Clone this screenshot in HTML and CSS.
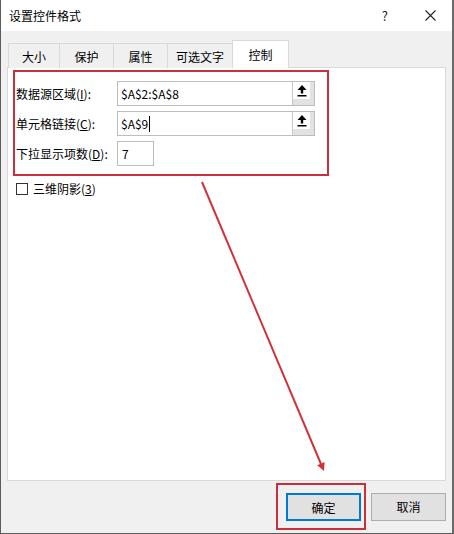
FILE: index.html
```html
<!DOCTYPE html>
<html lang="zh-CN">

  <head>
    <meta charset="UTF-8">
    <meta name="viewport" content="width=device-width, initial-scale=1.0">
    <title>设置控件格式</title>
    <link rel="stylesheet" href="styles.css">
  </head>

  <body>
    <div class="window">
      <div class="titlebar">
        <span class="title">设置控件格式</span>
        <span class="help">?</span>
        <svg class="close" width="11" height="11" viewBox="0 0 11 11">
          <path d="M0.5 0.5 L10.5 10.5 M10.5 0.5 L0.5 10.5" stroke="#222" stroke-width="1.1" fill="none"/>
        </svg>
      </div>

      <div class="dialog">
        <div class="tabs">
          <div class="tab" style="width:52px">大小</div>
          <div class="tab" style="width:55px">保护</div>
          <div class="tab" style="width:55px">属性</div>
          <div class="tab" style="width:66px">可选文字</div>
          <div class="tab active" style="width:57px">控制</div>
        </div>

        <div class="panel">
          <div class="mark-box">
            <div class="form">
              <label class="label">数据源区域(<u>I</u>):</label>
              <div class="ref-field">
                <span class="ref-text">$A$2:$A$8</span>
                <span class="ref-btn">
                  <svg width="10" height="12" viewBox="0 0 10 12">
                    <path d="M5 0 L9.5 5 L0.5 5 Z M3.8 5 H6.2 V8.6 H3.8 Z M0.5 10 H9.5 V11.6 H0.5 Z" fill="#000"/>
                  </svg>
                </span>
              </div>

              <label class="label">单元格链接(<u>C</u>):</label>
              <div class="ref-field">
                <span class="ref-text">$A$9<span class="caret"></span></span>
                <span class="ref-btn">
                  <svg width="10" height="12" viewBox="0 0 10 12">
                    <path d="M5 0 L9.5 5 L0.5 5 Z M3.8 5 H6.2 V8.6 H3.8 Z M0.5 10 H9.5 V11.6 H0.5 Z" fill="#000"/>
                  </svg>
                </span>
              </div>

              <label class="label">下拉显示项数(<u>D</u>):</label>
              <div class="num-field">7</div>
            </div>
          </div>

          <div class="check-row">
            <span class="checkbox"></span>
            <span>三维阴影(<u>3</u>)</span>
          </div>
        </div>

        <div class="footer">
          <div class="mark-btn">
            <button class="btn primary">确定</button>
          </div>
          <button class="btn">取消</button>
        </div>
      </div>

      <svg class="arrow" width="454" height="534" viewBox="0 0 454 534">
        <line x1="202" y1="182" x2="321" y2="464" stroke="#d0323a" stroke-width="2"/>
        <polygon points="324,471 324.6,462 317.2,465.2" fill="#d0323a"/>
      </svg>
    </div>
  </body>

</html>
```

FILE: styles.css
```css
* {
  box-sizing: border-box;
}

body {
  margin: 0;
  background-color: #fff;
  font-family: "Noto Sans CJK SC", "Noto Sans", sans-serif;
  font-size: 12px;
  color: #000;
}

.window {
  position: relative;
  width: 454px;
  height: 534px;
  display: flex;
  flex-direction: column;
  border-left: 1px solid #5c5c5c;
  border-right: 2px solid #6a6a6a;
  border-bottom: 1px solid #5c5c5c;
}

.titlebar {
  height: 31px;
  flex: none;
  display: flex;
  align-items: center;
  padding-left: 8px;
  background-color: #fff;
}

.title {
  font-size: 12px;
  flex: 1;
}

.help {
  font-size: 13px;
  margin-right: 37px;
  color: #222;
}

.close {
  margin-right: 16px;
}

.dialog {
  flex: 1;
  display: flex;
  flex-direction: column;
  background-color: #f0f0f0;
  padding: 9px 6px 0 6px;
}

.tabs {
  display: flex;
  align-items: flex-end;
  padding-left: 2px;
  height: 27px;
  position: relative;
  z-index: 1;
}

.tab {
  height: 25px;
  margin-left: -1px;
  margin-bottom: -1px;
  border: 1px solid #d9d9d9;
  border-bottom: none;
  background-color: #f0f0f0;
  display: flex;
  align-items: center;
  justify-content: center;
  font-size: 12px;
}

.tab.active {
  height: 28px;
  background-color: #fff;
}

.panel {
  height: 414px;
  background-color: #fff;
  border: 1px solid #d9d9d9;
  padding: 2px 0 0 5px;
}

.mark-box {
  width: 316px;
  height: 106px;
  border: 2px solid #c8303a;
  padding: 9px 0 0 1px;
}

.form {
  display: grid;
  grid-template-columns: 101px auto;
  row-gap: 5px;
  align-items: center;
  justify-items: start;
}

.label {
  white-space: nowrap;
}

.ref-field {
  display: flex;
  width: 198px;
  height: 25px;
  border: 1px solid #bdbdbd;
}

.ref-text {
  flex: 1;
  display: flex;
  align-items: center;
  padding-left: 3px;
  border-right: 1px solid #c8c8c8;
}

.caret {
  display: inline-block;
  width: 1px;
  height: 16px;
  margin-left: 1px;
  background-color: #000;
}

.ref-btn {
  width: 21px;
  display: flex;
  justify-content: center;
  padding: 3px 4px 0 0;
  background-color: #fff;
  box-shadow: inset -4px -6px 0 #e2e2e2;
}

.num-field {
  width: 37px;
  height: 25px;
  border: 1px solid #bdbdbd;
  padding: 3px 0 0 4px;
}

.check-row {
  display: flex;
  align-items: center;
  gap: 5px;
  margin: 4px 0 0 3px;
}

.checkbox {
  width: 12px;
  height: 12px;
  border: 1px solid #333;
}

.footer {
  flex: 1;
  display: flex;
  justify-content: flex-end;
  align-items: center;
  gap: 5px;
  padding-bottom: 1px;
}

.mark-btn {
  border: 2px solid #c8303a;
  padding: 8px 3px 7px 8px;
}

.btn {
  width: 75px;
  height: 28px;
  border: 1px solid #adadad;
  background-color: #e1e1e1;
  font-family: inherit;
  font-size: 12px;
  color: #000;
  padding: 0;
}

.btn.primary {
  border: 2px solid #0078d7;
}

.arrow {
  position: absolute;
  left: -1px;
  top: 0;
  pointer-events: none;
}
```
